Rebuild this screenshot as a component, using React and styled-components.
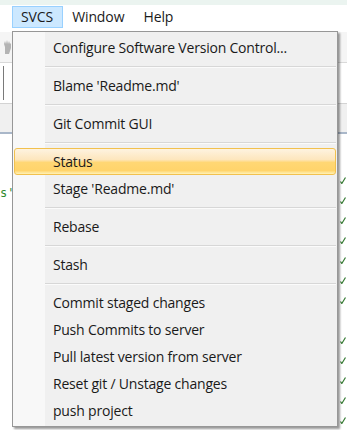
import React from 'react'
import styled, { createGlobalStyle } from 'styled-components'

const GlobalStyle = createGlobalStyle`
  html, body {
    margin: 0;
    padding: 0;
    background: #fff;
  }
  body {
    font-family: "Open Sans", "Noto Sans", "DejaVu Sans", sans-serif;
  }
`

const Screen = styled.div`
  position: relative;
  width: 347px;
  height: 430px;
  overflow: hidden;
  background: #fff;
  display: flex;
  flex-direction: column;
`

const TitleStrip = styled.div`
  height: 5px;
  background: #ebf4f0;
`

const MenuBar = styled.div`
  height: 27px;
  display: flex;
  align-items: flex-start;
  padding: 1px 0 0 12px;
  box-sizing: border-box;
  background: #fff;
`

const MenuTitle = styled.div`
  height: 22px;
  padding: 0 9px 0 8px;
  display: flex;
  align-items: center;
  box-sizing: border-box;
  font-size: 14px;
  letter-spacing: -0.1px;
  color: #1a1a1a;
  border: 1px solid ${p => (p.$open ? '#99d1ff' : 'transparent')};
  background: ${p => (p.$open ? '#cce8ff' : 'transparent')};
`

const Toolbar = styled.div`
  height: 30px;
  display: flex;
  align-items: center;
  padding-left: 3px;
  background: #f5f5f5;
  border-bottom: 1px solid #d9d9d9;
`

const SearchRow = styled.div`
  height: 42px;
  display: flex;
  align-items: center;
  padding-left: 3px;
  box-sizing: border-box;
  background: #fff;
  border-bottom: 1px solid #d3d3d3;
`

const Field = styled.div`
  width: 200px;
  height: 34px;
  border-left: 1px solid #7a7a7a;
`

const TabRow = styled.div`
  height: 28px;
  background: #f0f0f0;
  border-bottom: 2px solid #a9b7c9;
`

const Editor = styled.div`
  flex: 1;
  display: grid;
  grid-template-columns: 1fr 8px;
  background: #fff;
`

const Lines = styled.div`
  padding-top: 9px;
  font-family: "DejaVu Sans Mono", monospace;
  font-size: 12px;
`

const Line = styled.div`
  height: 20px;
  line-height: 20px;
  color: ${p => p.$color || '#000'};
  white-space: pre;
`

const Gutter = styled.div`
  padding-top: 36px;
  display: flex;
  flex-direction: column;
`

const Mark = styled.div`
  height: 20px;
  display: flex;
  align-items: center;
  padding-left: 1px;
`

const Menu = styled.div`
  position: absolute;
  left: 12px;
  top: 31px;
  width: 326px;
  box-sizing: border-box;
  padding: 2px 1px;
  border: 1px solid #979797;
  background: linear-gradient(90deg, #f8f8f8 0, #f8f8f8 32px, #f0f0f0 32px);
  box-shadow: 2px 2px 2px rgba(0, 0, 0, 0.4);
  display: flex;
  flex-direction: column;
`

const Item = styled.div`
  height: 27px;
  padding-left: 38px;
  display: flex;
  align-items: center;
  box-sizing: border-box;
  font-size: 14px;
  letter-spacing: -0.2px;
  color: #1a1a1a;
  border: 1px solid ${p => (p.$active ? '#f2c14e' : 'transparent')};
  border-radius: 3px;
  background: ${p =>
    p.$active
      ? 'linear-gradient(180deg, #fef3e0 0%, #fde6bd 42%, #ffd774 54%, #ffd46b 86%, #fff2b8 100%)'
      : 'transparent'};
`

const Separator = styled.div`
  height: 11px;
  margin-left: 31px;
  display: flex;
  flex-direction: column;
  justify-content: center;

  &::before {
    content: '';
    height: 1px;
    background: #d7d7d7;
  }
  &::after {
    content: '';
    height: 1px;
    background: #fbfbfb;
  }
`

const menu = [
  'Configure Software Version Control...',
  '-',
  "Blame 'Readme.md'",
  '-',
  'Git Commit GUI',
  '-',
  'Status',
  "Stage 'Readme.md'",
  '-',
  'Rebase',
  '-',
  'Stash',
  '-',
  'Commit staged changes',
  'Push Commits to server',
  'Pull latest version from server',
  'Reset git / Unstage changes',
  'push project',
]

const ticks = [1, 1, 1, 1, 1, 1, 1, 0, 1, 1, 1, 1, 1]

function Tick() {
  return (
    <svg width="6" height="7" viewBox="0 0 6 7">
      <path d="M0.5 4.5 L1.8 6.5 L5.5 0.5" stroke="#357a32" strokeWidth="1.2" fill="none" />
    </svg>
  )
}

function ToolIcon() {
  return (
    <svg width="9" height="16" viewBox="0 0 9 16">
      <path d="M2 15 L2 8 L1 5 L2 2 L3 5 L4 1 L5 5 L6 2 L7 5 L8 4 L8 9 L6 15 Z" fill="#b4b4b4" />
    </svg>
  )
}

export default function App() {
  return (
    <>
      <GlobalStyle />
      <Screen>
        <TitleStrip />
        <MenuBar>
          <MenuTitle $open>SVCS</MenuTitle>
          <MenuTitle>Window</MenuTitle>
          <MenuTitle>Help</MenuTitle>
        </MenuBar>
        <Toolbar>
          <ToolIcon />
        </Toolbar>
        <SearchRow>
          <Field />
        </SearchRow>
        <TabRow />
        <Editor>
          <Lines>
            <Line />
            <Line />
            <Line $color="#2e8b2e">s'</Line>
          </Lines>
          <Gutter>
            {ticks.map((t, i) => (
              <Mark key={i}>{t ? <Tick /> : null}</Mark>
            ))}
          </Gutter>
        </Editor>
        <Menu>
          {menu.map((label, i) =>
            label === '-' ? (
              <Separator key={i} />
            ) : (
              <Item key={i} $active={label === 'Status'}>
                {label}
              </Item>
            )
          )}
        </Menu>
      </Screen>
    </>
  )
}
